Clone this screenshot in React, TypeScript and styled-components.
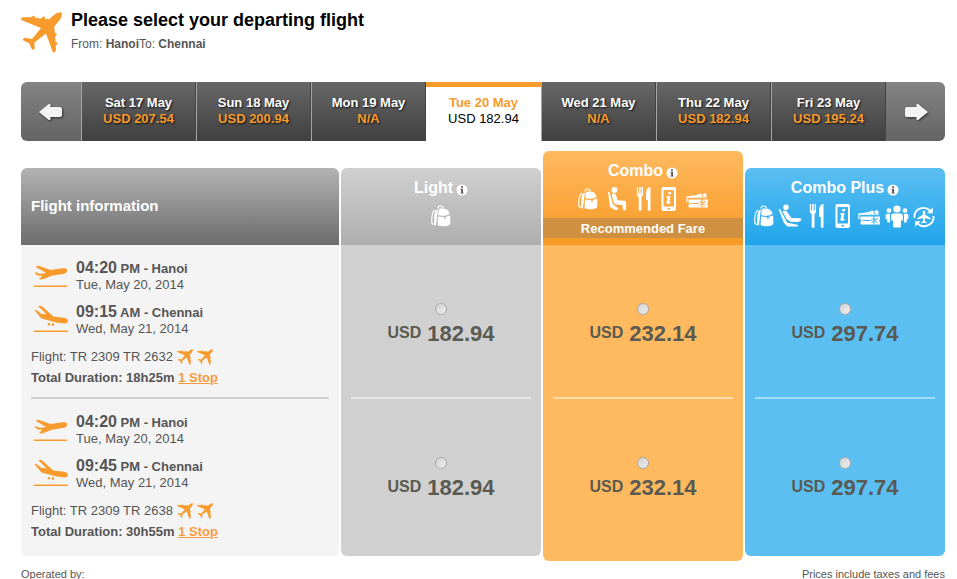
import React from "react";
import styled, { createGlobalStyle, css } from "styled-components";

const GlobalStyle = createGlobalStyle`
  *, *::before, *::after { box-sizing: border-box; }
  body {
    margin: 0;
    background: #fff;
    color: #555;
    font-family: "Liberation Sans", Arial, Helvetica, sans-serif;
    font-size: 13px;
    line-height: 16px;
  }
`;

const orange = "#f79b2c";

/* ---------- icons ---------- */

const PlaneIcon = ({ size }: { size: number }) => (
  <svg width={size} height={size} viewBox="0 0 41 41" fill={orange} aria-hidden="true">
    <path d="M40.600.6C38.500-.1 35.500.8 33 3l-5 4.200-4.200-.5.200-1.500-1.500-1-2.500 2.200-6.200-.6.200-1.300-1.500-1-2.300 1.800L1.800 5.300.2 6v2L20 16 11 27l-7.500-1.300-1.500 1.200v1.400l6.200 3 2.800 6.300 1.600.2 1.200-1.600-.4-5.800L25 21.500l6.800 18.700h1.700l1.500-1.500-.3-5.200 2-1.800-.6-1.600-1.600.1-.4-5.600 1.900-1.900-.7-1.500-1.500.1-.5-6.900 5-6C39.900 6.500 41.300 3.500 40.600.6z" />
  </svg>
);

const DepartIcon = () => (
  <svg width="34" height="24" viewBox="0 0 34 24" fill={orange} aria-hidden="true">
    <path d="m1.500 2.700 3-.9L16.500 6l11.800-1.700c2.500-.3 4.800.2 4.900 1.700.1 2-1.200 3.200-3.200 3.700l-12.300 2-8.700 3.600-4 .1 3.300-4-4 .4L.3 9l2.200-.7 3.200 1.700 6.500-1z" />
    <path d="M0 21.500h33V23H0z" />
  </svg>
);

const ArriveIcon = () => (
  <svg width="34" height="29" viewBox="0 0 34 29" fill={orange} aria-hidden="true">
    <path d="m4 2 3.700-.1L19.300 12.500l10.700 1.200c2.500.4 4 1.600 3.900 3.300-.1 1.800-1.500 2.500-3.500 2.400l-8-.8L7.500 14.500.3 6l2.500.2L7.500 10l5 .3z" />
    <circle cx="15" cy="20.300" r="1.300" />
    <circle cx="19" cy="20.600" r="1.300" />
    <path d="M0 26.500h34V28H0z" />
  </svg>
);

const InfoIcon = () => (
  <svg width="12" height="12" viewBox="0 0 12 12" aria-hidden="true">
    <circle cx="6" cy="6" r="5.500" fill="#fff" />
    <path d="M5 2.200h2v1.600H5zM4.500 4.800H7v3.900h.8v.9H4.400v-.9h.8v-3h-.7z" fill="#555" />
  </svg>
);

const ArrowIcon = ({ flip }: { flip?: boolean }) => (
  <svg width="26" height="20" viewBox="0 0 26 20" aria-hidden="true">
    <g transform={flip ? "translate(26 0) scale(-1 1)" : undefined}>
      <path
        d="M1 10 10.500 2.300c1-.8 2-.3 2 1V5H22c1.200 0 2 .8 2 2v6c0 1.200-.8 2-2 2h-9.500v1.700c0 1.300-1 1.800-2 1z"
        fill="#f3f3f3"
      />
    </g>
  </svg>
);

const BagIcon = () => (
  <svg width="20" height="24" viewBox="0 0 20 24" fill="#fff" aria-hidden="true">
    <path d="M7 4.500c-.2-3 4.500-3.500 5.500-.5" fill="none" stroke="#fff" strokeWidth="1.200" />
    <path d="M4.200 6C.8 7.500.5 12 .8 19l1.700 1.800" fill="none" stroke="#fff" strokeWidth="1.200" />
    <path d="M7.300 5.500c-3 .5-3.700 3-4 7.500L3 20.500l1.800 1.500 1-7c.3-4 .3-6.500 1.500-9.500z" />
    <path d="M8.500 4.800c5-1 9.500.7 10 5.200l-3.800 1.800-.7-.8-1 .9-5.800-.6c0-2.500.3-4.900 1.300-6.500z" />
    <path d="m7 12.500 6.300.7.200 2h1l.2-2.100 4-1.700.6 1.400v6.500c0 2-3.700 3.200-7.500 2.900-3 0-5.300-.6-5.200-1.700z" />
  </svg>
);

const SeatIcon = () => (
  <svg width="20" height="24" viewBox="0 0 20 24" fill="#fff" aria-hidden="true">
    <circle cx="7.500" cy="3" r="2.900" />
    <path d="M1 5h1.500L6 17.500l5 3.500v2H8l-5-3z" />
    <path d="M4.700 7.500C5 6 8 6 9 8l1.500 5.200 7.300.6c1.200.2 1.400 1 1.300 2v7.500h-3l-.7-5.300-6.900-.6L6.500 15z" />
  </svg>
);

const ReclineIcon = () => (
  <svg width="24" height="24" viewBox="0 0 24 24" fill="#fff" aria-hidden="true">
    <circle cx="8" cy="3.200" r="2.700" />
    <path d="M.5 5H2l7 13.500 11 2.500v1.500H9.500L6 19z" />
    <path d="M4.500 7.200c1-1.200 3.500-1 4.500.6l4.500 6.200 8.500.3c1.500.2 1.700 1.200 1 2.200l-3 1.500-7.500-.3L8.500 15z" />
  </svg>
);

const MealIcon = () => (
  <svg width="16" height="24" viewBox="0 0 16 24" fill="#fff" aria-hidden="true">
    <path d="M.8 0h1.300v6.500h1V0h1.600v6.500h1V0H7v7c0 1.500-.6 2.300-1.500 3V23c0 1.200-2.800 1.200-2.800 0V10C1.500 9.500.8 8.500.8 7z" />
    <path d="M14.500 0v23c0 1.200-2.700 1.200-2.700 0V13H10V7c0-3.500 1.500-7 4.500-7z" />
  </svg>
);

const PhoneIcon = () => (
  <svg width="16" height="24" viewBox="0 0 16 24" aria-hidden="true">
    <path
      fill="#fff"
      fillRule="evenodd"
      d="M2.500 0h10.500c1 0 2 .8 2 2v20c0 1.200-1 2-2 2H2.500c-1 0-2-.8-2-2V2c0-1.200 1-2 2-2zM2.500 3v16.500h10.500V3zM6.500 21v1.500H9V21z"
    />
    <path fill="#fff" d="M7.500 5h2.700l-.4 2.300H7.200zM5.500 9h4L8.300 15l1.500-.4-.4 1.600c-2 1.200-4.300 1-3.900-1l.9-4.700H5.200z" />
  </svg>
);

const TicketIcon = () => (
  <svg width="23" height="24" viewBox="0 0 23 24" aria-hidden="true">
    <path fill="#fff" d="M.5 9.500 11 8l3-1.500 2 1L19 6l1.500 1.500v3.800H1.500v4L.3 15z" />
    <path fill="#fff" d="M2.500 12.500H22v3c-1.200.2-1.200 1.800 0 2V20.500H2.500v-2.500c1.200-.2 1.200-2 0-2.200z" />
    <path
      d="M2 11.300h11M4.500 16.500H12M13 10.500l3 1.500 3.500-1.700M16 12v8.500M12.500 16.500l3-2 1.200 1.300L20 14.500M13.500 19l2.500-2.500 3.500 2M16 7.500l.5 3"
      fill="none"
      stroke="currentColor"
      strokeWidth="1"
    />
  </svg>
);

const PeopleIcon = () => (
  <svg width="24" height="24" viewBox="0 0 24 24" fill="#fff" aria-hidden="true">
    <circle cx="12" cy="5" r="3.600" />
    <circle cx="4" cy="6.500" r="2.300" />
    <circle cx="20" cy="6.500" r="2.300" />
    <path d="M8 9.500h8c1 0 1.800 1 1.800 2V16c0 1-1.300 1-1.800 0v6c0 1-1 1.500-2 1.500h-4c-1 0-2-.5-2-1.500v-6c-.5 1-1.800 1-1.800 0v-4.500c0-1 .8-2 1.800-2z" />
    <path d="M2.500 9.800h2.500v8.700H3.500c-1 0-1.300-.5-1.300-1.300V15C1.500 15.500.6 15 .6 14v-2.200c0-1.200.9-2 1.900-2zM21.500 9.800H19v8.700h1.500c1 0 1.300-.5 1.300-1.300V15c.7.500 1.600 0 1.600-1v-2.200c0-1.200-.9-2-1.900-2z" />
  </svg>
);

const ChangeIcon = () => (
  <svg width="22" height="24" viewBox="0 0 22 24" aria-hidden="true">
    <path d="M1.500 14C.5 5 11 .5 17.500 7M20.500 12C21.500 20.500 11 25.500 4.500 19.500" fill="none" stroke="#fff" strokeWidth="1.800" />
    <path d="M19.800 3.500v5.800h-5.800zM2 22.800v-5.500h5.600z" fill="#fff" />
    <path
      d="M11 6.500c.8 0 1.200 1 1.200 2v2.200l5.300 3.300v1.400l-5.300-1.500-.3 3.100 1.700 1.300v1l-2.600-.6-2.600.6v-1l1.700-1.300-.3-3.100-5.300 1.500V14l5.300-3.300V8.500c0-1 .4-2 1.200-2z"
      fill="#fff"
    />
  </svg>
);

/* ---------- layout ---------- */

const Page = styled.main`
  padding: 9px 12px 0 21px;
`;

const Header = styled.header`
  display: flex;
  gap: 9px;
  height: 73px;
  svg { margin-top: 3px; }
`;

const Title = styled.h1`
  margin: 0;
  color: #000;
  font-size: 18px;
  line-height: 22px;
`;

const Route = styled.p`
  margin: 5px 0 0;
  font-size: 12px;
`;

const DateBar = styled.nav`
  display: grid;
  grid-template-columns: 60px repeat(7, minmax(0, 1fr)) 59px;
  height: 59px;
  border-radius: 6px;
  overflow: hidden;
`;

const StepButton = styled.button`
  display: flex;
  align-items: center;
  justify-content: center;
  padding: 0;
  border: 0;
  background: linear-gradient(#848484, #646464);
  cursor: pointer;
  svg { filter: drop-shadow(1px 1px 1px rgba(0, 0, 0, 0.6)); }
`;

const DateButton = styled.button<{ $active?: boolean }>`
  display: flex;
  flex-direction: column;
  align-items: center;
  padding: 13px 0 0;
  border: 0;
  border-left: 1px solid #a5a5a5;
  border-right: 1px solid #444;
  background: linear-gradient(#676767, #404040);
  color: ${orange};
  font: bold 13px/16px "Liberation Sans", Arial, sans-serif;
  text-shadow: 1px 1px 2px rgba(0, 0, 0, 0.8);
  cursor: pointer;
  ${(p) =>
    p.$active &&
    css`
      padding-top: 8px;
      border-left: 0;
      border-right: 0;
      background: linear-gradient(${orange} 0 5px, #fff 5px);
      padding-top: 13px;
      color: #000;
      font-weight: normal;
      text-shadow: none;
    `}
`;

const DateLabel = styled.span<{ $active?: boolean }>`
  color: ${(p) => (p.$active ? orange : "#fff")};
  font-weight: bold;
`;

const Fares = styled.table`
  width: 100%;
  margin-top: 10px;
  border-collapse: collapse;
  table-layout: fixed;
`;

const InfoCol = styled.col`
  width: 318px;
`;

type Tone = "light" | "combo" | "plus";

const tones: Record<Tone, { body: string; head: string; line: string; ink: string }> = {
  light: { body: "#d0d0d0", head: "linear-gradient(#d0d0d0, #aeaeae)", line: "#e8e8e8", ink: "#bdbdbd" },
  combo: { body: "#ffb95f", head: "linear-gradient(#ffb95f, #f79a25)", line: "#ffdca9", ink: "#faa43a" },
  plus: { body: "#5bbff2", head: "linear-gradient(#5bbff2, #20a5eb)", line: "#a5dcf8", ink: "#38afee" },
};

const HeadCell = styled.th`
  padding: 0 0 0 2px;
  vertical-align: bottom;
  font-weight: bold;
  &:first-child { padding-left: 0; }
`;

const BodyCell = styled.td`
  padding: 0 0 0 2px;
  vertical-align: top;
  &:first-child { padding-left: 0; }
`;

const InfoHead = styled.div`
  height: 77px;
  padding: 30px 10px 0;
  border-radius: 6px 6px 0 0;
  background: linear-gradient(#b3b3b3, #6c6c6c);
  color: #fff;
  font-size: 15px;
  text-align: left;
`;

const FareHead = styled.div<{ $tone: Tone }>`
  height: ${(p) => (p.$tone === "combo" ? 94 : 77)}px;
  padding-top: 11px;
  border-radius: 6px 6px 0 0;
  background: ${(p) => tones[p.$tone].head};
  color: #fff;
`;

const FareName = styled.div`
  display: flex;
  align-items: center;
  justify-content: center;
  gap: 3px;
  font-size: 16px;
  line-height: 18px;
`;

const InfoButton = styled.button`
  display: flex;
  padding: 4px 0 0;
  border: 0;
  background: none;
  cursor: pointer;
`;

const Perks = styled.div<{ $tone: Tone }>`
  display: flex;
  align-items: center;
  justify-content: center;
  gap: 9px;
  height: 24px;
  margin-top: 7px;
  color: ${(p) => tones[p.$tone].ink};
  ${(p) =>
    p.$tone === "plus" &&
    css`
      justify-content: space-between;
      gap: 0;
      padding: 0 10px 0 9px;
      svg[width="16"] { margin: 0 3px; }
    `}
`;

const Ribbon = styled.div`
  height: 20px;
  margin-top: 7px;
  background: #cf9141;
  font-size: 13px;
  line-height: 21px;
`;

const Panel = styled.div<{ $tone?: Tone; $last?: boolean }>`
  display: flex;
  flex-direction: column;
  height: ${(p) => (!p.$last ? 154 : p.$tone === "combo" ? 162 : 157)}px;
  padding: 0 10px;
  background: ${(p) => (p.$tone ? tones[p.$tone].body : "#f4f4f4")};
  border-radius: ${(p) => (p.$last ? "0 0 6px 6px" : "0")};
  &::after {
    content: "";
    display: ${(p) => (p.$last ? "none" : "block")};
    height: 2px;
    margin-top: auto;
    background: ${(p) => (p.$tone ? tones[p.$tone].line : "#d0d0d0")};
  }
`;

const Leg = styled.div<{ $arrival?: boolean }>`
  display: flex;
  gap: 8px;
  height: ${(p) => (p.$arrival ? 46 : 44)}px;
  padding-left: 3px;
  svg { margin-top: ${(p) => (p.$arrival ? 1 : 5)}px; }
`;

const Legs = styled.div`
  padding-top: 14px;
`;

const LegTime = styled.div`
  font-weight: bold;
  line-height: 18px;
`;

const Time = styled.span`
  font-size: 16px;
`;

const LegDate = styled.div`
  line-height: 14px;
`;

const FlightLine = styled.div`
  display: flex;
  align-items: center;
  gap: 4px;
  height: 16px;
`;

const Duration = styled.div`
  margin-top: 5px;
  font-weight: bold;
`;

const StopLink = styled.a`
  color: #f99b3c;
  text-decoration: underline;
`;

const Choice = styled.label`
  display: flex;
  flex-direction: column;
  align-items: center;
  padding-top: 58px;
  color: #5a5a52;
  font-weight: bold;
  cursor: pointer;
`;

const Radio = styled.input`
  appearance: none;
  width: 12px;
  height: 12px;
  margin: 0;
  border: 1px solid #a8a8a8;
  border-radius: 50%;
  background: linear-gradient(135deg, #d2d2d2, #efefef);
  &:checked { background: radial-gradient(#444 0 3px, #e4e4e4 4px); }
`;

const Price = styled.span`
  display: flex;
  align-items: center;
  gap: 6px;
  margin-top: 6px;
  font-size: 22px;
  line-height: 26px;
`;

const Currency = styled.span`
  font-size: 16px;
  line-height: 24px;
  padding-bottom: 2px;
`;

const Notes = styled.footer`
  display: flex;
  justify-content: space-between;
  margin-top: 5px;
  font-size: 11px;
`;

/* ---------- data ---------- */

const dates = [
  ["Sat 17 May", "USD 207.54"],
  ["Sun 18 May", "USD 200.94"],
  ["Mon 19 May", "N/A"],
  ["Tue 20 May", "USD 182.94"],
  ["Wed 21 May", "N/A"],
  ["Thu 22 May", "USD 182.94"],
  ["Fri 23 May", "USD 195.24"],
];

const fares: { tone: Tone; name: string; price: string; perks: React.FC[] }[] = [
  { tone: "light", name: "Light", price: "182.94", perks: [BagIcon] },
  { tone: "combo", name: "Combo", price: "232.14", perks: [BagIcon, SeatIcon, MealIcon, PhoneIcon, TicketIcon] },
  {
    tone: "plus",
    name: "Combo Plus",
    price: "297.74",
    perks: [BagIcon, ReclineIcon, MealIcon, PhoneIcon, TicketIcon, PeopleIcon, ChangeIcon],
  },
];

const flights = [
  { arrive: "09:15", half: "AM", code: "TR 2309 TR 2632", duration: "18h25m" },
  { arrive: "09:45", half: "PM", code: "TR 2309 TR 2638", duration: "30h55m" },
];

export default function App() {
  return (
    <>
      <GlobalStyle />
      <Page>
        <Header>
          <PlaneIcon size={41} />
          <div>
            <Title>Please select your departing flight</Title>
            <Route>
              From: <b>Hanoi</b>To: <b>Chennai</b>
            </Route>
          </div>
        </Header>

        <DateBar aria-label="Departure dates">
          <StepButton type="button" aria-label="Earlier dates">
            <ArrowIcon />
          </StepButton>
          {dates.map(([day, price], i) => (
            <DateButton key={day} type="button" $active={i === 3}>
              <DateLabel $active={i === 3}>{day}</DateLabel>
              <span>{price}</span>
            </DateButton>
          ))}
          <StepButton type="button" aria-label="Later dates">
            <ArrowIcon flip />
          </StepButton>
        </DateBar>

        <Fares>
          <colgroup>
            <InfoCol />
            <col />
            <col />
            <col />
          </colgroup>
          <thead>
            <tr>
              <HeadCell scope="col">
                <InfoHead>Flight information</InfoHead>
              </HeadCell>
              {fares.map((fare) => (
                <HeadCell key={fare.tone} scope="col">
                  <FareHead $tone={fare.tone}>
                    <FareName>
                      {fare.name}
                      <InfoButton type="button" aria-label={`About ${fare.name}`}>
                        <InfoIcon />
                      </InfoButton>
                    </FareName>
                    <Perks $tone={fare.tone}>
                      {fare.perks.map((Perk, i) => (
                        <Perk key={i} />
                      ))}
                    </Perks>
                    {fare.tone === "combo" && <Ribbon>Recommended Fare</Ribbon>}
                  </FareHead>
                </HeadCell>
              ))}
            </tr>
          </thead>
          <tbody>
            {flights.map((flight, i) => {
              const last = i === flights.length - 1;
              return (
                <tr key={flight.code}>
                  <BodyCell>
                    <Panel $last={last}>
                      <Legs>
                        <Leg>
                          <DepartIcon />
                          <div>
                            <LegTime>
                              <Time>04:20</Time> PM - Hanoi
                            </LegTime>
                            <LegDate>Tue, May 20, 2014</LegDate>
                          </div>
                        </Leg>
                        <Leg $arrival>
                          <ArriveIcon />
                          <div>
                            <LegTime>
                              <Time>{flight.arrive}</Time> {flight.half} - Chennai
                            </LegTime>
                            <LegDate>Wed, May 21, 2014</LegDate>
                          </div>
                        </Leg>
                        <FlightLine>
                          <span>Flight: {flight.code}</span>
                          <PlaneIcon size={16} />
                          <PlaneIcon size={16} />
                        </FlightLine>
                        <Duration>
                          Total Duration: {flight.duration} <StopLink href="#stops">1 Stop</StopLink>
                        </Duration>
                      </Legs>
                    </Panel>
                  </BodyCell>
                  {fares.map((fare) => (
                    <BodyCell key={fare.tone}>
                      <Panel $tone={fare.tone} $last={last}>
                        <Choice>
                          <Radio type="radio" name="fare" value={`${i}-${fare.tone}`} />
                          <Price>
                            <Currency>USD</Currency> {fare.price}
                          </Price>
                        </Choice>
                      </Panel>
                    </BodyCell>
                  ))}
                </tr>
              );
            })}
          </tbody>
        </Fares>

        <Notes>
          <span>Operated by:</span>
          <span>Prices include taxes and fees</span>
        </Notes>
      </Page>
    </>
  );
}
